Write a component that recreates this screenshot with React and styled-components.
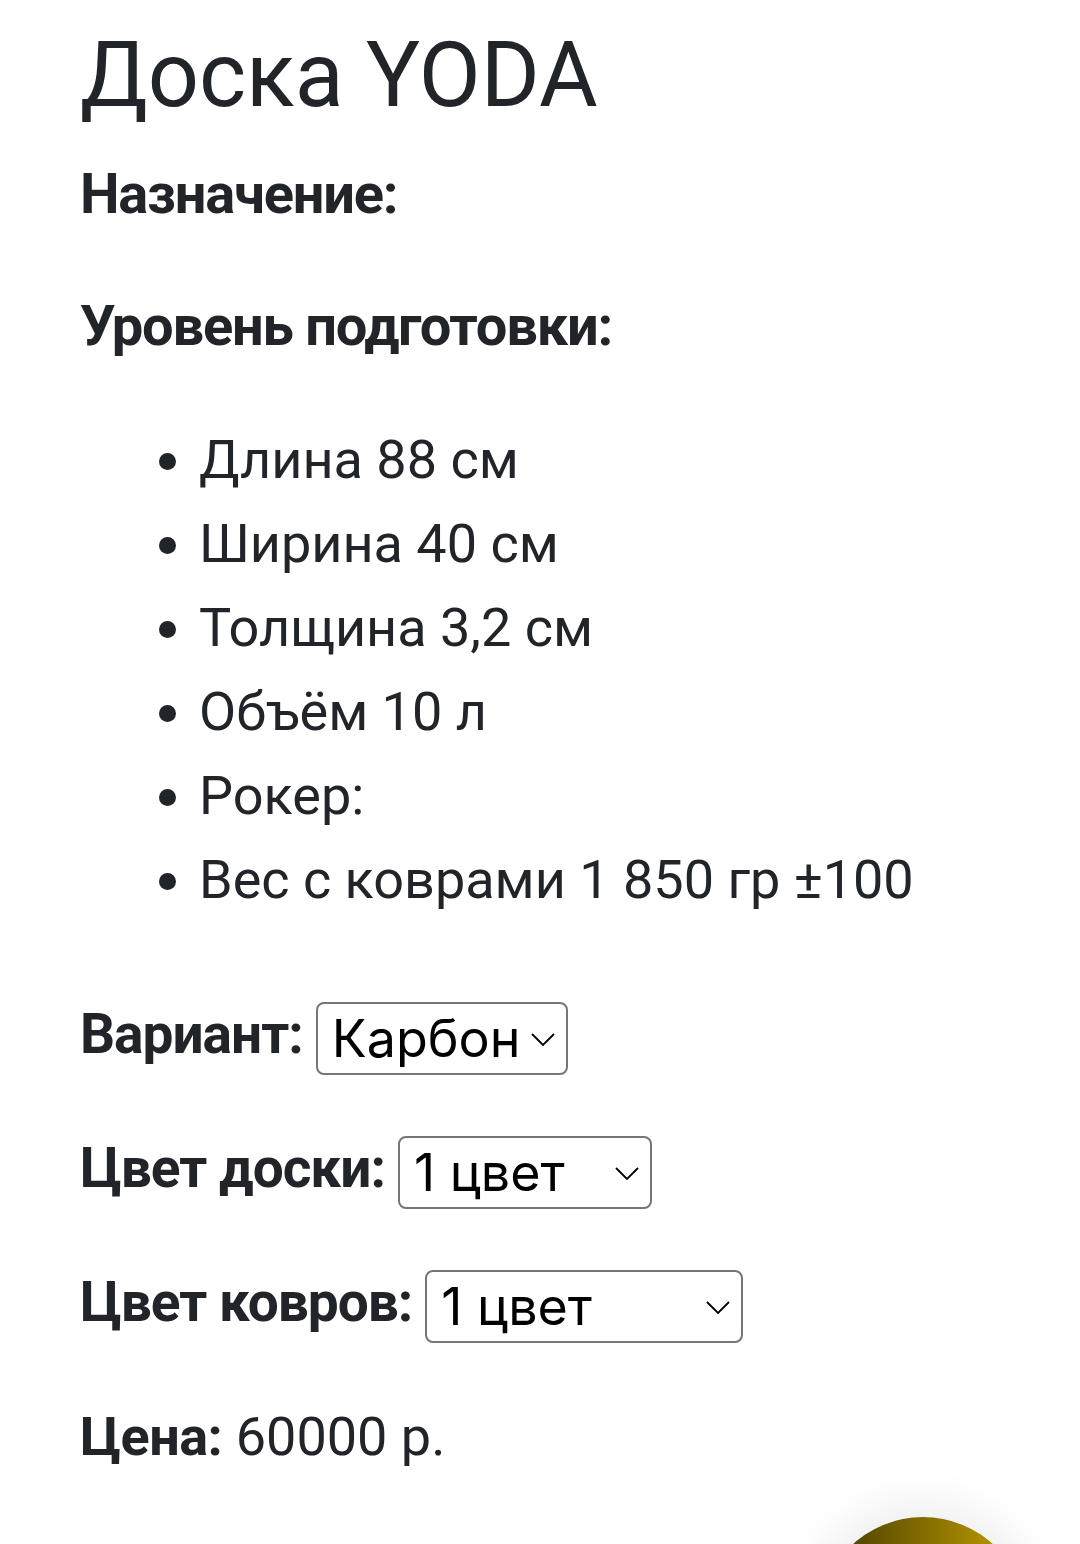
import React from "react";
import styled, { createGlobalStyle } from "styled-components";

const Global = createGlobalStyle`
  html, body { margin: 0; padding: 0; background: #fff; }
  body {
    font-family: Roboto, "Liberation Sans", sans-serif;
    color: #212529;
    overflow: hidden;
  }
`;

const Page = styled.main`
  padding: 21px 80px 0 80px;
  min-height: 1544px;
  box-sizing: border-box;
`;

const Title = styled.h1`
  margin: 0;
  font-size: 90px;
  font-weight: 400;
  line-height: 110px;
`;

const Label = styled.h5`
  margin: ${(p) => p.$mt}px 0 0;
  font-size: 56px;
  font-weight: 700;
  line-height: 67px;
  letter-spacing: -1.2px;
`;

const Specs = styled.ul`
  margin: 58px 0 0;
  padding-left: 119px;
  font-size: 54px;
  line-height: 84px;
`;

const Row = styled.div`
  display: flex;
  align-items: center;
  gap: 13px;
  margin-top: ${(p) => p.$mt}px;
`;

const RowLabel = styled.span`
  font-size: 55px;
  font-weight: 700;
  line-height: 67px;
  letter-spacing: -1px;
  position: relative;
  top: -4px;
`;

const SelectWrap = styled.div`
  position: relative;
  width: ${(p) => p.$w}px;
  height: 73px;
`;

const Select = styled.select`
  appearance: none;
  -webkit-appearance: none;
  width: 100%;
  height: 100%;
  box-sizing: border-box;
  border: 2.5px solid #767676;
  border-radius: 8px;
  background: #fff;
  color: #000;
  font-family: Inter, "Noto Sans", sans-serif;
  font-size: 52px;
  padding: 0 40px 0 14px;
  margin: 0;
`;

const Chevron = styled.svg`
  position: absolute;
  right: 13px;
  top: 50%;
  width: 24px;
  height: 13px;
  margin-top: -6px;
  pointer-events: none;
`;

const Price = styled.p`
  margin: 60px 0 0;
  font-size: 54px;
  line-height: 67px;
`;

const PriceLabel = styled.strong`
  font-weight: 700;
  letter-spacing: -0.5px;
`;

const Fab = styled.div`
  position: fixed;
  left: 819px;
  top: 1517px;
  width: 208px;
  height: 208px;
  border-radius: 50%;
  background: linear-gradient(90deg, #3f3500 0%, #8a7200 55%, #c9a300 100%);
  box-shadow: 0 0 40px 18px rgba(0, 0, 0, 0.06);
`;

function Dropdown({ width, value, options }) {
  return (
    <SelectWrap $w={width}>
      <Select defaultValue={value}>
        {options.map((o) => (
          <option key={o} value={o}>
            {o}
          </option>
        ))}
      </Select>
      <Chevron viewBox="0 0 24 13">
        <path d="M1 1 L12 12 L23 1" fill="none" stroke="#000" strokeWidth="1.8" />
      </Chevron>
    </SelectWrap>
  );
}

export default function App() {
  return (
    <>
      <Global />
      <Page>
        <Title>Доска YODA</Title>
        <Label $mt={30}>Назначение:</Label>
        <Label $mt={65}>Уровень подготовки:</Label>
        <Specs>
          <li>Длина 88 см</li>
          <li>Ширина 40 см</li>
          <li>Толщина 3,2 см</li>
          <li>Объём 10 л</li>
          <li>Рокер:</li>
          <li>Вес с коврами 1 850 гр ±100</li>
        </Specs>
        <Row $mt={80}>
          <RowLabel>Вариант:</RowLabel>
          <Dropdown width={252} value="Карбон" options={["Карбон", "Стекло"]} />
        </Row>
        <Row $mt={61}>
          <RowLabel>Цвет доски:</RowLabel>
          <Dropdown width={254} value="1 цвет" options={["1 цвет", "2 цвета"]} />
        </Row>
        <Row $mt={61}>
          <RowLabel>Цвет ковров:</RowLabel>
          <Dropdown width={318} value="1 цвет" options={["1 цвет", "2 цвета"]} />
        </Row>
        <Price>
          <PriceLabel>Цена:</PriceLabel> 60000 р.
        </Price>
      </Page>
      <Fab />
    </>
  );
}
